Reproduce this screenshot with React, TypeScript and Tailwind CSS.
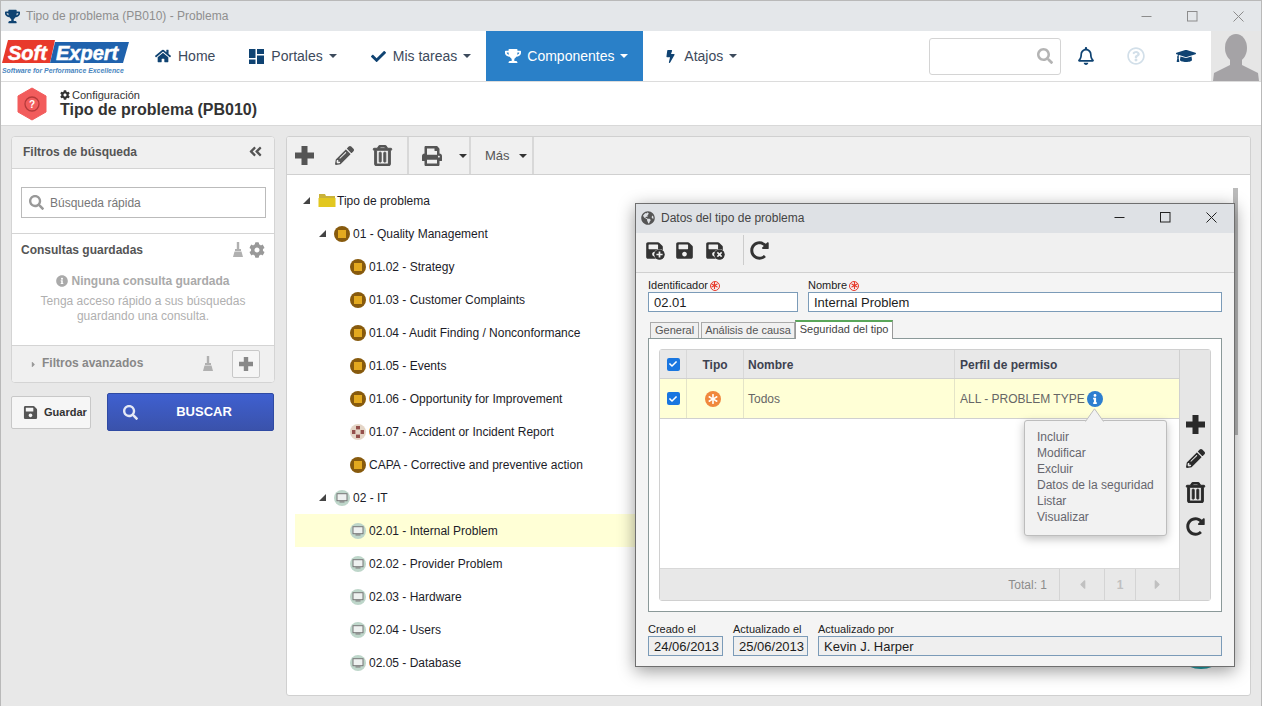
import {
  FaHome,
  FaCheck,
  FaTrophy,
  FaBolt,
  FaRegBell,
  FaGraduationCap,
  FaSearch,
  FaCog,
  FaPencilAlt,
  FaRegTrashAlt,
  FaPrint,
  FaSave,
  FaRedoAlt,
  FaGlobeAmericas,
  FaInfoCircle,
  FaAngleDoubleLeft,
  FaCaretLeft,
  FaCaretRight,
  FaRegQuestionCircle,
  FaAsterisk,
  FaInfo,
  FaPlusCircle,
  FaTimesCircle,
} from "react-icons/fa";

function Logo() {
  return (
    <svg width="132" height="50" viewBox="0 0 132 50" className="shrink-0">
      <path d="M7 9 H54 L49 32 H1 Z" fill="#e8392b" />
      <path d="M54 11 H128 L122 32 H49 Z" fill="#1f62ad" />
      <text x="7" y="29" fontFamily="Liberation Sans" fontSize="20" fontWeight="700" fontStyle="italic" fill="#fff" stroke="#fff" strokeWidth="0.5">
        Soft
      </text>
      <text x="55" y="29" fontFamily="Liberation Sans" fontSize="20" fontWeight="700" fontStyle="italic" fill="#fff" stroke="#fff" strokeWidth="0.5">
        Expert
      </text>
      <text x="1" y="42" fontFamily="Liberation Sans" fontSize="6.9" fontStyle="italic" fontWeight="700" fill="#4a86c0">
        Software for Performance Excellence
      </text>
    </svg>
  );
}

function PortalIcon() {
  return (
    <svg width="15" height="15" viewBox="0 0 15 15" fill="#0f4372">
      <rect x="0" y="0" width="6.5" height="9" />
      <rect x="8" y="0" width="7" height="5" />
      <rect x="0" y="10.5" width="6.5" height="4.5" />
      <rect x="8" y="6.5" width="7" height="8.5" />
    </svg>
  );
}

function PlusIcon({ size }: { size: number }) {
  return (
    <svg width={size} height={size} viewBox="0 0 19 19" fill="currentColor" className="shrink-0">
      <path d="M6.5 0 H12.5 V6.5 H19 V12.5 H12.5 V19 H6.5 V12.5 H0 V6.5 H6.5 Z" />
    </svg>
  );
}

function BrushIcon({ className }: { className?: string }) {
  return (
    <svg width="12" height="16" viewBox="0 0 12 16" className={className} fill="currentColor">
      <rect x="4.8" y="0" width="2.4" height="7" />
      <rect x="3" y="7" width="6" height="2" />
      <path d="M2.5 9.6 H9.5 L11 15 H1 Z" />
    </svg>
  );
}

function Caret({ className }: { className?: string }) {
  return (
    <span
      className={
        "inline-block w-0 h-0 border-x-[4px] border-t-[4px] border-x-transparent border-t-current " + (className ?? "")
      }
    />
  );
}

function Triangle() {
  return (
    <svg width="7" height="7" viewBox="0 0 7 7" fill="#444">
      <path d="M7 0 V7 H0 Z" />
    </svg>
  );
}

function NodeIcon({ kind }: { kind: string }) {
  if (kind === "folder") {
    return (
      <svg width="18" height="15" viewBox="0 0 18 15">
        <path d="M1 1 H7 L8 3 H17 V5 H1 Z" fill="#c9b23a" />
        <path d="M0.5 5 H17.5 V14 H0.5 Z" fill="#e2c71f" />
      </svg>
    );
  }
  if (kind === "pc") {
    return (
      <svg width="16" height="16" viewBox="0 0 16 16">
        <circle cx="8" cy="8" r="8" fill="#bed6ca" />
        <rect x="3" y="3.7" width="10" height="7" fill="#eef1f0" stroke="#777" strokeWidth="1" />
        <rect x="5.5" y="11.2" width="5" height="1.4" fill="#8a8a8a" />
      </svg>
    );
  }
  if (kind === "ring") {
    return (
      <svg width="16" height="16" viewBox="0 0 16 16">
        <circle cx="8" cy="8" r="8" fill="#e4d5c6" />
        <rect x="6" y="2" width="4" height="3.4" fill="#94504c" />
        <rect x="6" y="10.6" width="4" height="3.4" fill="#94504c" />
        <rect x="2" y="6" width="3.4" height="4" fill="#94504c" />
        <rect x="10.6" y="6" width="3.4" height="4" fill="#94504c" />
      </svg>
    );
  }
  return (
    <div className="w-[16px] h-[16px] rounded-full bg-[#875a0d] flex items-center justify-center">
      <div className="w-[8px] h-[8px] bg-[#e3a91f]" />
    </div>
  );
}

const rows = [
  { label: "Tipo de problema", icon: "folder", depth: 0 },
  { label: "01 - Quality Management", icon: "box", depth: 1 },
  { label: "01.02 - Strategy", icon: "box", depth: 2 },
  { label: "01.03 - Customer Complaints", icon: "box", depth: 2 },
  { label: "01.04 - Audit Finding / Nonconformance", icon: "box", depth: 2 },
  { label: "01.05 - Events", icon: "box", depth: 2 },
  { label: "01.06 - Opportunity for Improvement", icon: "box", depth: 2 },
  { label: "01.07 - Accident or Incident Report", icon: "ring", depth: 2 },
  { label: "CAPA - Corrective and preventive action", icon: "box", depth: 2 },
  { label: "02 - IT", icon: "pc", depth: 1 },
  { label: "02.01 - Internal Problem", icon: "pc", depth: 2, active: true },
  { label: "02.02 - Provider Problem", icon: "pc", depth: 2 },
  { label: "02.03 - Hardware", icon: "pc", depth: 2 },
  { label: "02.04 - Users", icon: "pc", depth: 2 },
  { label: "02.05 - Database", icon: "pc", depth: 2 },
];

function Tree() {
  return (
    <div className="pt-[9px] pl-[8px] w-[600px]">
      {rows.map((r) => (
        <div
          key={r.label}
          className={
            "flex items-center h-[33px] text-[12px] text-[#1c1c28] " +
            (r.depth === 0 ? "pl-[8px] " : r.depth === 1 ? "pl-[24px] " : "pl-[55px] ") +
            (r.active ? "bg-[#ffffd6]" : "")
          }
        >
          {r.depth < 2 && (
            <span className="w-[15px] flex items-center">
              <Triangle />
            </span>
          )}
          <span className={r.depth === 0 ? "mr-[1px]" : "mr-[3px]"}>
            <NodeIcon kind={r.icon} />
          </span>
          <span>{r.label}</span>
        </div>
      ))}
    </div>
  );
}

function LeftPanel() {
  return (
    <div className="w-[264px] shrink-0">
      <div className="h-[247px] border border-[#d4d4d4] rounded-[4px] bg-white overflow-hidden flex flex-col">
        <div className="h-[32px] shrink-0 bg-[#f0f0f0] border-b border-[#d4d4d4] flex items-center justify-between px-[11px] pb-[2px] text-[12px] font-bold text-[#555]">
          <span>Filtros de búsqueda</span>
          <FaAngleDoubleLeft className="text-[#555] text-[15px]" />
        </div>
        <div className="h-[65px] shrink-0 border-b border-[#d4d4d4] pl-[9px] pr-[8px] pt-[18px]">
          <div className="h-[31px] border border-[#bbb] flex items-center pl-[7px] gap-[6px] text-[12px] text-[#777]">
            <FaSearch className="text-[#999] text-[15px]" />
            <span>Búsqueda rápida</span>
          </div>
        </div>
        <div className="flex-1 px-[9px]">
          <div className="flex items-center justify-between h-[30px] mt-[1px] text-[12px] font-bold text-[#555]">
            <span>Consultas guardadas</span>
            <span className="flex items-center gap-[5px] text-[#aaa]">
              <BrushIcon className="text-[#b0b0b0]" />
              <FaCog className="text-[#999] text-[16px]" />
            </span>
          </div>
          <div className="flex items-center justify-center gap-[3px] text-[12px] font-bold text-[#aaa] mt-[7px]">
            <FaInfoCircle className="text-[#aaa] text-[12px]" />
            <span>Ninguna consulta guardada</span>
          </div>
          <p className="text-[12px] leading-[15px] text-[#b0b0b0] text-center mt-[4px]">
            Tenga acceso rápido a sus búsquedas
            <br />
            guardando una consulta.
          </p>
        </div>
        <div className="h-[37px] shrink-0 bg-[#f0f0f0] border-t border-[#d4d4d4] flex items-center pl-[17px] pr-[14px] text-[12px] font-bold text-[#888]">
          <FaCaretRight className="text-[#999] text-[9px] mr-[4px]" />
          <span className="mb-[2px]">Filtros avanzados</span>
          <BrushIcon className="text-[#b0b0b0] ml-auto mr-[18px]" />
          <div className="w-[28px] h-[28px] border border-[#c8c8c8] rounded-[2px] bg-[#f5f5f5] flex items-center justify-center text-[#888]">
            <PlusIcon size={14} />
          </div>
        </div>
      </div>
      <div className="flex items-center mt-[10px] gap-[16px]">
        <div className="w-[80px] h-[33px] border border-[#c8c8c8] rounded-[2px] bg-[#f6f6f6] flex items-center pl-[11px] gap-[6px] text-[11px] font-bold text-[#333]">
          <FaSave className="text-[#555] text-[15px]" />
          <span>Guardar</span>
        </div>
        <div className="w-[167px] h-[38px] rounded-[2px] border border-[#2f4aa3] bg-gradient-to-b from-[#3f60d0] to-[#3a52ab] flex items-center pl-[15px] text-[13px] font-bold text-white">
          <FaSearch className="text-[#e4e8f5] text-[15px]" />
          <span className="flex-1 text-center pr-[3px]">BUSCAR</span>
        </div>
      </div>
    </div>
  );
}

function Required() {
  return (
    <span className="w-[10px] h-[10px] rounded-full border border-[#e8392b] flex items-center justify-center ml-[2px]">
      <FaAsterisk className="text-[#e8392b] text-[7px]" />
    </span>
  );
}

function Field({ label, value, required, width, grow, readOnly }: { label: string; value: string; required?: boolean; width?: string; grow?: boolean; readOnly?: boolean }) {
  return (
    <div className={(grow ? "flex-1 " : "") + (width ?? "")}>
      <div className="flex items-center h-[13px] text-[11px] text-[#222]">
        {label}
        {required && <Required />}
      </div>
      <div
        className={
          "h-[20px] border border-[#7b9bb8] pl-[5px] pt-[1px] flex items-center text-[13px] text-[#1c1c1c] " +
          (readOnly ? "bg-[#efefef]" : "bg-white")
        }
      >
        {value}
      </div>
    </div>
  );
}

function Tab({ label, active, pad }: { label: string; active?: boolean; pad?: string }) {
  if (active) {
    return (
      <div className="h-[19px] px-[4px] pb-[2px] flex items-center bg-white border-x border-[#999] border-t-2 border-t-[#5aa65a] text-[11px] text-[#444] -mb-[1px] relative">
        {label}
      </div>
    );
  }
  return (
    <div className={"h-[16px] pb-[1px] flex items-center bg-[#f0f0f0] border-x border-t border-[#aaa] text-[11px] text-[#555] " + (pad ?? "")}>
      {label}
    </div>
  );
}

function SaveBadge({ badge }: { badge?: "plus" | "x" }) {
  return (
    <span className="relative w-[20px] h-[20px] flex items-center">
      <FaSave className="text-[#333] text-[19px]" />
      {badge === "plus" && <FaPlusCircle className="absolute right-0 bottom-0 text-[11px] text-[#333] bg-[#f0f0f0] rounded-full" />}
      {badge === "x" && <FaTimesCircle className="absolute right-0 bottom-0 text-[11px] text-[#333] bg-[#f0f0f0] rounded-full" />}
    </span>
  );
}

function Popover() {
  return (
    <div className="absolute left-[364px] top-[70px] w-[143px] h-[116px] bg-[#f2f2f2] border border-[#bdbdbd] rounded-[3px] shadow-[0_3px_10px_rgba(0,0,0,0.25)] pl-[12px] pt-[8px] text-[12px] leading-[16px] text-[#66666e] z-10">
      <svg width="19" height="14" viewBox="0 0 19 14" className="absolute left-[60px] -top-[13px]">
        <path d="M0.5 13 L9.5 0.8 L18.5 13 V14 H0.5 Z" fill="#f2f2f2" />
        <path d="M0.5 13.5 L9.5 0.8 L18.5 13.5" fill="none" stroke="#bdbdbd" />
      </svg>
      <div>Incluir</div>
      <div>Modificar</div>
      <div>Excluir</div>
      <div>Datos de la seguridad</div>
      <div>Listar</div>
      <div>Visualizar</div>
    </div>
  );
}

function CheckBox() {
  return (
    <span className="w-[13px] h-[13px] rounded-[2px] bg-[#1976e0] flex items-center justify-center">
      <FaCheck className="text-white text-[8px]" />
    </span>
  );
}

function Grid() {
  return (
    <div className="mx-[10px] mt-[10px] h-[252px] flex border border-[#d0d0d0] rounded-[3px] relative">
      <div className="flex-1 flex flex-col min-w-0">
        <div className="h-[29px] flex bg-[#e8e8e8] border-b border-[#d0d0d0] text-[12px] font-bold text-[#3d4250]">
          <div className="w-[27px] border-r border-[#d8d8d8] flex items-center justify-center">
            <CheckBox />
          </div>
          <div className="w-[57px] border-r border-[#d8d8d8] flex items-center justify-center pt-[1px]">Tipo</div>
          <div className="w-[211px] border-r border-[#d8d8d8] flex items-center pl-[4px] pt-[1px]">Nombre</div>
          <div className="flex-1 flex items-center pl-[5px] pt-[1px]">Perfil de permiso</div>
        </div>
        <div className="h-[40px] flex bg-[#ffffd6] border-b border-[#d0d0d0] text-[12px] text-[#666]">
          <div className="w-[27px] border-r border-[#e4e4c8] flex items-center justify-center">
            <CheckBox />
          </div>
          <div className="w-[57px] border-r border-[#e4e4c8] flex items-center justify-center pr-[5px]">
            <span className="w-[16px] h-[16px] rounded-full bg-[#f0883e] flex items-center justify-center">
              <FaAsterisk className="text-white text-[10px]" />
            </span>
          </div>
          <div className="w-[211px] border-r border-[#e4e4c8] flex items-center pl-[4px]">Todos</div>
          <div className="flex-1 flex items-center pl-[5px] gap-[2px]">
            <span>ALL - PROBLEM TYPE</span>
            <span className="w-[16px] h-[16px] rounded-full bg-[#2d7fd0] flex items-center justify-center">
              <FaInfo className="text-white text-[10px]" />
            </span>
          </div>
        </div>
        <div className="flex-1 bg-white" />
        <div className="h-[32px] flex items-center justify-end bg-[#e8e8e8] border-t border-[#d8d8d8] text-[12px] text-[#8c8c8c]">
          <span className="pr-[12px]">Total: 1</span>
          <div className="w-[45px] h-full border-l border-[#d4d4d4] flex items-center justify-center">
            <FaCaretLeft className="text-[#c0c0c0] text-[15px]" />
          </div>
          <div className="w-[31px] h-full border-l border-[#d4d4d4] flex items-center justify-center text-[#c0c0c0] font-bold">1</div>
          <div className="w-[44px] h-full border-l border-[#d4d4d4] flex items-center justify-center">
            <FaCaretRight className="text-[#c0c0c0] text-[15px]" />
          </div>
        </div>
      </div>
      <div className="w-[31px] shrink-0 bg-[#e6e6e6] border-l border-[#d0d0d0] flex flex-col items-center pt-[58px] text-[#2a2a2a]">
        <div className="h-[33px] flex items-center"><PlusIcon size={19} /></div>
        <div className="h-[34px] flex items-center"><FaPencilAlt className="text-[19px]" /></div>
        <div className="h-[34px] flex items-center"><FaRegTrashAlt className="text-[21px] stroke-[24]" /></div>
        <div className="h-[34px] flex items-center"><FaRedoAlt className="text-[19px]" /></div>
      </div>
      <Popover />
    </div>
  );
}

function WindowButtons({ dark }: { dark?: boolean }) {
  const stroke = dark ? "#222" : "#8c8c8c";
  return (
    <div className="flex items-center">
      <div className="w-[46px] flex justify-center">
        <svg width="11" height="11" viewBox="0 0 11 11">
          <path d="M0.5 5.5 H10.5" stroke={stroke} fill="none" />
        </svg>
      </div>
      <div className="w-[46px] flex justify-center">
        <svg width="11" height="11" viewBox="0 0 11 11">
          <rect x="0.5" y="0.5" width="9.5" height="9.5" stroke={stroke} fill="none" />
        </svg>
      </div>
      <div className="w-[46px] flex justify-center">
        <svg width="11" height="11" viewBox="0 0 11 11">
          <path d="M0.5 0.5 L10.5 10.5 M10.5 0.5 L0.5 10.5" stroke={stroke} fill="none" />
        </svg>
      </div>
    </div>
  );
}

function Dialog() {
  return (
    <div className="absolute left-[634px] top-[202px] w-[600px] h-[464px] border border-[#6f6f6f] bg-[#f4f4f4] shadow-[0_4px_16px_rgba(0,0,0,0.4)] flex flex-col z-20">
      <div className="h-[29px] shrink-0 bg-[#dee1e5] flex items-center pl-[5px] pb-[2px] gap-[6px] text-[12px] text-[#444]">
        <FaGlobeAmericas className="text-[#555] text-[14px]" />
        <span>Datos del tipo de problema</span>
        <div className="ml-auto flex items-center">
          <WindowButtons dark />
        </div>
      </div>
      <div className="h-[40px] shrink-0 bg-[#f0f0f0] border-b border-[#d0d0d0] flex items-center pl-[9px] pb-[5px]">
        <SaveBadge badge="plus" />
        <span className="ml-[10px]"><SaveBadge /></span>
        <span className="ml-[10px]"><SaveBadge badge="x" /></span>
        <span className="ml-[18px] mr-[6px] w-px h-[30px] bg-[#ccc]" />
        <FaRedoAlt className="text-[#333] text-[19px]" />
      </div>
      <div className="flex gap-[10px] px-[12px] mt-[6px]">
        <Field label="Identificador" value="02.01" required width="w-[150px]" />
        <Field label="Nombre" value="Internal Problem" required grow />
      </div>
      <div className="flex items-end pl-[14px] mt-[8px] h-[18px]">
        <Tab label="General" pad="px-[4px] mr-[2px]" />
        <Tab label="Análisis de causa" pad="px-[3px]" />
        <Tab label="Seguridad del tipo" active />
      </div>
      <div className="mx-[12px] h-[274px] bg-white border border-[#8b9999]">
        <Grid />
      </div>
      <div className="flex gap-[10px] px-[12px] mt-[11px]">
        <Field label="Creado el" value="24/06/2013" width="w-[75px]" readOnly />
        <Field label="Actualizado el" value="25/06/2013" width="w-[75px]" readOnly />
        <Field label="Actualizado por" value="Kevin J. Harper" grow readOnly />
      </div>
    </div>
  );
}

export default function App() {
  return (
    <div className="relative w-[1262px] h-[706px] overflow-hidden bg-[#e8e8e8] font-['Liberation_Sans',Arial,sans-serif] flex flex-col border border-[#b9b9b9] border-b-0">
      <div className="h-[30px] shrink-0 bg-[#e4e7ea] flex items-center pl-[4px] text-[12px] text-[#8f8f8f]">
        <FaTrophy className="text-[#0f4372] text-[15px] mr-[6px]" />
        <span>Tipo de problema (PB010) - Problema</span>
        <div className="ml-auto">
          <WindowButtons />
        </div>
      </div>

      <div className="h-[51px] shrink-0 bg-white border-b border-[#dcdcdc] flex items-center">
        <Logo />
        <div className="flex items-center ml-[2px] text-[14px] text-[#3d4a5c]">
          <div className="flex items-center h-[50px] pl-[20px] pr-[20px]">
            <FaHome className="text-[#0f4372] text-[16px] mr-[7px]" />
            <span>Home</span>
          </div>
          <div className="flex items-center h-[50px] pl-[14px] pr-[14px]">
            <PortalIcon />
            <span className="ml-[7px] mr-[6px]">Portales</span>
            <Caret />
          </div>
          <div className="flex items-center h-[50px] pl-[20px] pr-[15px]">
            <FaCheck className="text-[#0f4372] text-[15px]" />
            <span className="ml-[7px] mr-[6px]">Mis tareas</span>
            <Caret />
          </div>
          <div className="flex items-center h-[50px] w-[157px] pl-[19px] bg-[#2a80c8] text-white">
            <FaTrophy className="text-white text-[16px]" />
            <span className="ml-[6px] mr-[6px]">Componentes</span>
            <Caret />
          </div>
          <div className="flex items-center h-[50px] pl-[21px]">
            <FaBolt className="text-[#0f4372] text-[13px]" />
            <span className="ml-[7px] mr-[6px]">Atajos</span>
            <Caret />
          </div>
        </div>
        <div className="ml-auto flex items-center h-full">
          <div className="w-[132px] h-[37px] border border-[#d4d4d4] rounded-[3px] flex items-center justify-end pr-[7px]">
            <FaSearch className="text-[#b4b4b4] text-[16px]" />
          </div>
          <FaRegBell className="text-[#0f4372] text-[18px] ml-[16px]" />
          <FaRegQuestionCircle className="text-[#d2dfe9] text-[18px] ml-[32px]" />
          <FaGraduationCap className="text-[#0f4372] text-[20px] ml-[31px] mr-[15px]" />
          <div className="w-[50px] h-[50px] bg-[#e6e6e6] overflow-hidden">
            <svg width="50" height="50" viewBox="0 0 50 50" fill="#a5a3a6">
              <ellipse cx="25" cy="17" rx="11" ry="14" />
              <path d="M19 27 H31 V34 L47 42 L48 50 H2 L3 42 L19 34 Z" />
            </svg>
          </div>
        </div>
      </div>

      <div className="h-[44px] shrink-0 bg-white border-b border-[#d8d8d8] flex items-center pl-[16px]">
        <svg width="30" height="34" viewBox="0 0 30 34" className="shrink-0">
          <path d="M15 1 L29 9 V25 L15 33 L1 25 V9 Z" fill="#f25c5c" stroke="#f25c5c" strokeLinejoin="round" />
          <circle cx="15" cy="17" r="7" fill="none" stroke="#b53a3a" strokeWidth="1.3" />
          <text x="15" y="20.5" textAnchor="middle" fontFamily="Liberation Sans" fontWeight="700" fontSize="10" fill="#fff">
            ?
          </text>
        </svg>
        <div className="ml-[13px] text-[#333]">
          <div className="flex items-center gap-[2px] text-[11px] leading-[12px]">
            <FaCog className="text-[#333] text-[10px]" />
            <span>Configuración</span>
          </div>
          <div className="text-[16px] leading-[18px] font-bold">Tipo de problema (PB010)</div>
        </div>
      </div>

      <div className="flex-1 min-h-0 flex gap-[11px] p-[10px]">
        <LeftPanel />
        <div className="flex-1 bg-white border border-[#d0d0d0] rounded-[3px] overflow-hidden relative">
          <div className="h-[38px] bg-[#f0f0f0] border-b border-[#d0d0d0] flex items-center text-[#555]">
            <div className="w-[122px] h-full border-r-2 border-[#d8d8d8] flex items-center pl-[8px]">
              <PlusIcon size={19} />
              <FaPencilAlt className="text-[19px] ml-[21px]" />
              <FaRegTrashAlt className="text-[21px] stroke-[24] ml-[18px]" />
            </div>
            <div className="w-[62px] h-full border-r-2 border-[#d8d8d8] flex items-center pl-[13px] gap-[17px]">
              <FaPrint className="text-[20px]" />
              <Caret className="text-[#333]" />
            </div>
            <div className="w-[63px] h-full border-r-2 border-[#d8d8d8] flex items-center pl-[14px] gap-[9px] text-[13px]">
              <span>Más</span>
              <Caret className="text-[#333]" />
            </div>
          </div>
          <Tree />
          <div className="absolute left-[946px] top-[51px] w-[5px] h-[247px] bg-[#bbb]" />
          <div className="absolute left-[884px] top-[472px] w-[60px] h-[60px] rounded-full bg-[#1f9fa8]" />
        </div>
      </div>

      <Dialog />
    </div>
  );
}
